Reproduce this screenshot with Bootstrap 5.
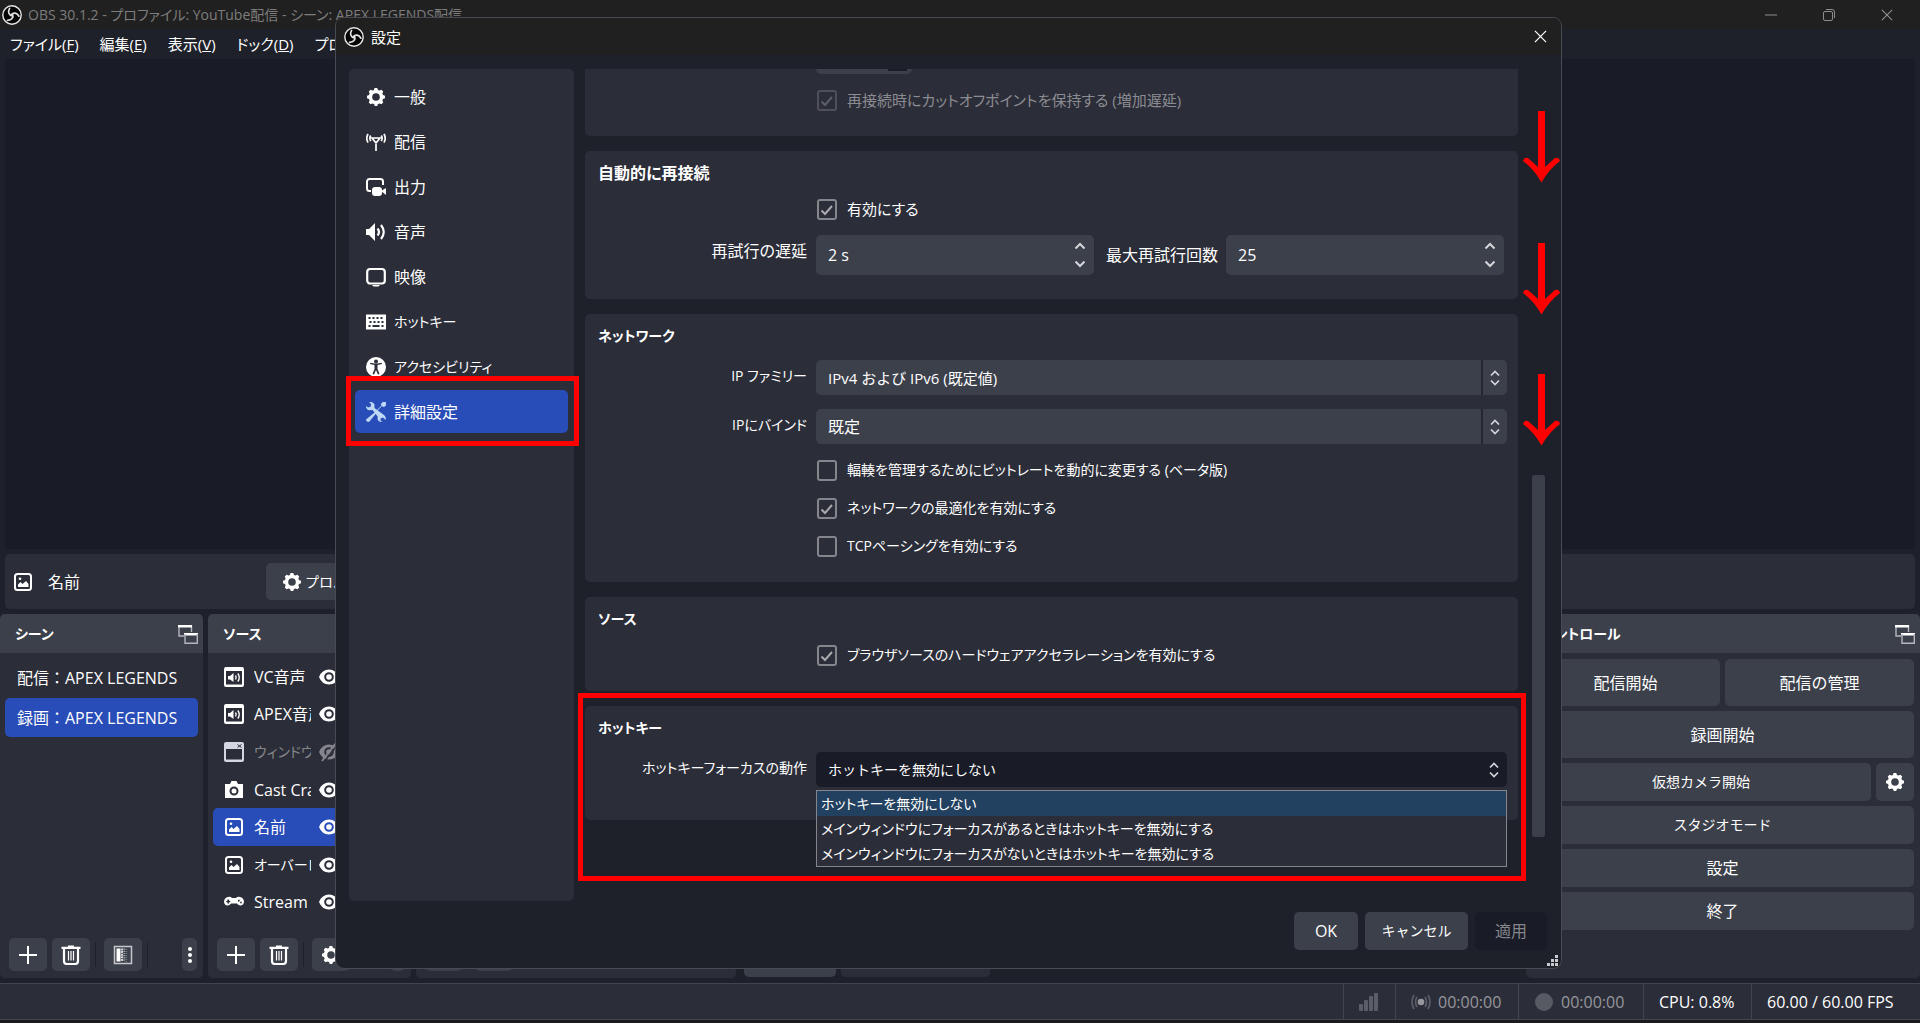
<!DOCTYPE html>
<html lang="ja" data-bs-theme="dark">
<head>
<meta charset="utf-8">
<meta name="viewport" content="width=device-width, initial-scale=1">
<title>OBS 30.1.2</title>
<link rel="stylesheet" href="https://cdn.jsdelivr.net/npm/bootstrap@5.3.0/dist/css/bootstrap.min.css">
<style>
:root{--win:#1f212a;--panel:#2b2d38;--ctl:#3c404b;--deep:#191b26;--sel:#284cb8}
body{background:var(--win);color:#fefefe;font:16px/24px "Open Sans","Noto Sans CJK JP",sans-serif;font-feature-settings:"palt";overflow:hidden}
svg{display:block;flex:none}
.ico{width:20px;height:20px;fill:currentColor}
.t14{font-size:14px!important}
.t15{font-size:15px!important}
.app{height:100vh}
.titlebar{height:29px;background:#202020;color:#7d7d7d;padding-left:2px;gap:6px}
.titlebar .winbtn{width:58px;height:29px}
.winbtn{background:none;border:0;color:#8d8d8d;padding:0}
.menubar{height:30px;padding-left:10px;gap:21px}
.menubar a{color:inherit;text-decoration:none;white-space:nowrap}
.preview{background:var(--deep);margin:0 5px 5px}
.ctxbar{height:55px;background:var(--panel);border-radius:5px;margin:0 5px 5px;padding-left:8px}
.ctxbar .ctxname{width:218px;margin-left:15px}
.ctxbar .tool{height:37px;padding:0 16px;gap:3px}
.tool{background:var(--ctl);border:0;border-radius:5px;color:#fefefe;display:flex;align-items:center;justify-content:center;padding:0;white-space:nowrap}
.docks{height:364px;gap:5px}
.dock{background:var(--panel);border-radius:5px;overflow:hidden;flex:none}
.dock-narrow{width:203px}
.dock-mixer{width:320px}
.dock-ctl{width:394px}
.dockhead{height:39px;background:var(--ctl);font-weight:700;font-size:14px;padding:0 5px 0 15px}
.docktools{height:33px;padding:0 6px 0 9px;margin-bottom:7px;gap:5px}
.docktools .tool{width:38px;height:33px}
.docktools .kebab{width:15px}
.docktools .rule{width:1px;height:25px;background:var(--win);margin-right:3px}
.scenes{padding:5px;gap:1px;font-feature-settings:normal}
.scenes a,.srcs a{color:inherit;text-decoration:none;border-radius:5px;white-space:nowrap}
.scenes a{height:39px;padding:0 12px;display:flex;align-items:center}
.scenes .on,.srcs .on{background:var(--sel)}
.srcs{padding:5px 5px 17px}
.srcs a{display:flex;align-items:center;flex:1 1 0;padding-left:11px;gap:10px}
.srcs span{width:57px;overflow:hidden}
.srcs .eye{margin-left:-2px}
.srcs .off{color:#85868c}
.srcs .pale{color:#d5d7e0}
.tabs{gap:5px;margin-left:3px;padding-bottom:1px}
.tabs .tool{height:33px;width:92px}
.tabs .idle{background:var(--panel);width:149px}
.ctlbtns{padding:6px 6px 0 5px;gap:5px}
.ctlbtns>div{gap:5px}
.ctlbtns .tool{height:38px}
.ctlbtns .tall{height:47px}
.ctlbtns .sq{width:38px}
.status{height:37px;margin-top:5px;border-top:1px solid #42454f;border-bottom:1px solid #42454f;background:var(--panel)}
.status>div{border-left:1px solid #42454f;display:flex;align-items:center;gap:7px;height:100%;padding:0 15px;white-space:nowrap}
.status .st1{width:52px}.status .st2{width:123px}.status .st3{width:125px}.status .st4{width:108px}.status .st5{width:169px}
.dim{color:#96979c}
.deskedge{height:3px;background:#1a1a1a}
/* settings window floats over the main window */
.dlg{position:absolute;inset:17px 358px 54px 335px;background:var(--win);border:1px solid #494b52;border-radius:9px;overflow:hidden}
.dlghead{height:37px;background:#202020;padding:0 14px 0 8px;gap:7px}
.dlghead .winbtn{color:#fff}
.dlgbody{padding:14px 16px 0 13px;gap:11px}
.side{width:225px;background:var(--panel);border-radius:5px;padding:6px 6px;gap:2px}
.side a{height:43px;display:flex;align-items:center;gap:8px;padding-left:11px;color:inherit;text-decoration:none;border-radius:5px}
.side .on{background:var(--sel)}
.side .on svg{color:#bcd8f4}
.pane{gap:15px;min-width:0}
.sect{background:var(--panel);border-radius:5px;padding:10px 11px 24px 13px;display:flex;flex-direction:column;gap:14px}
.sect.cut{border-radius:0 0 5px 5px;padding-top:0}
.sect.last{padding-bottom:33px}
.sect h2{font-size:16px;line-height:24px;font-weight:700;margin:0 0 -2px}
.frow{display:flex;gap:9px;align-items:flex-start}
.frow .cap{width:209px;text-align:right;padding-top:4px;white-space:nowrap;flex:none}
.chk{margin:0 0 0 219px;display:flex;align-items:center;height:24px;padding:0;min-height:0}
.chk .form-check-input{width:20px;height:21px;margin:0 10px 0 0;float:none;background-color:transparent;border:2px solid #85868c;border-radius:3px;box-shadow:none;background-size:100% 100%;flex:none}
.chk .form-check-input:checked{background-color:transparent;border-color:#85868c;background-image:url("data:image/svg+xml,%3csvg xmlns='http://www.w3.org/2000/svg' viewBox='0 0 16 17'%3e%3cpath d='M2.5 9.5 6 13 13 5' fill='none' stroke='%23a9aaae' stroke-width='2'/%3e%3c/svg%3e")}
.chk .form-check-input:disabled{opacity:.4}
.chk .form-check-input:disabled~label{opacity:1;color:#8b8c91}
.field{position:relative}
.field input,.field select{background:var(--ctl);color:#fefefe;border:0;border-radius:5px;padding:0 12px;box-shadow:none;font-size:16px;line-height:24px;width:100%}
.field input{height:40px}
.field select{height:35px;background-image:none}
.field select.open{background:var(--deep)}
.field .arr{position:absolute;inset:0 0 0 auto;width:26px;display:flex;align-items:center;justify-content:center;pointer-events:none;color:#d5d6da}
.field .split{border-left:2px solid #252731}
.spins{padding-right:3px;gap:8px}
.spins .arr{width:28px}
.slid{height:5px;width:96px;margin-left:218px;background:var(--ctl);border-radius:0 0 5px 5px;padding-left:72px}
.slid i{display:block;width:19px;height:2px;background:var(--deep)}
.drop{position:absolute;left:0;right:0;top:38px;border:1px solid #85868c;background:var(--panel);list-style:none;margin:0;padding:0;z-index:2}
.drop li{height:25px;line-height:25px;padding-left:4px;white-space:nowrap}
.drop .on{background:#22405f}
.thumb{width:13px;background:var(--ctl);border-radius:3px;margin:406px 0 64px 3px}
.dlgfoot{padding:11px 14px 18px;gap:7px}
.dlgfoot .tool{height:38px}
.b1{width:64px}.b2{width:103px}.b3{width:72px}
.dlgfoot .tool:disabled{background:var(--deep);color:#85868c}
.grip{position:absolute;right:2px;bottom:1px}
/* red annotations drawn over the window */
.redbox{position:absolute;border:5px solid #f00;pointer-events:none}
.rb1{left:346px;top:376px;width:233px;height:70px}
.rb2{left:578px;right:394px;top:693px;height:188px}
.arrow{position:absolute;right:360px;width:37px;height:72px}
.a1{top:111px}.a2{top:243px}.a3{top:374px}
</style>
</head>
<body>
<svg width="0" height="0" class="position-absolute" aria-hidden="true">
<symbol id="obs" viewBox="0 0 20 20"><circle cx="10" cy="10" r="9.200" fill="#050505" stroke="#e8e8e8" stroke-width="1.400"/><g fill="none" stroke="#e0e0e0" stroke-width="1.700" stroke-linecap="round"><path d="M10.200 10.800C7 10.300 5.400 7 7.600 3.400"/><path d="M10.200 10.800C7 10.300 5.400 7 7.600 3.400" transform="rotate(120 10 10)"/><path d="M10.200 10.800C7 10.300 5.400 7 7.600 3.400" transform="rotate(240 10 10)"/></g></symbol>
<symbol id="gear" viewBox="0 0 20 20"><path fill-rule="evenodd" d="m8.200 1.500.6-.5h2.400l.8 2 1.400.6 2-.9 1.800 1.800-.8 2 .6 1.400 2 .8v2.600l-2 .8-.6 1.400.8 2-1.800 1.800-2-.8-1.400.6-.8 2H8.800l-.8-2-1.400-.6-2 .8-1.800-1.800.8-2-.6-1.400-2-.8V8.700l2-.8.6-1.400-.8-2 1.800-1.800 2 .9L8 3zM10 6.200a3.800 3.800 0 1 0 0 7.600 3.800 3.800 0 0 0 0-7.600z"/></symbol>
<symbol id="ant" viewBox="0 0 20 20"><path d="M6 6h8l-4 5zM10 10v9M4.700 3.500q-1.600 2.800 0 5.600M2 2q-2.400 4.300 0 8.600M15.300 3.500q1.600 2.800 0 5.600M18 2q2.400 4.300 0 8.600" fill="none" stroke="currentColor" stroke-width="1.700"/></symbol>
<symbol id="out" viewBox="0 0 20 20"><path d="M5 14H3.500A2.500 2.500 0 0 1 1 11.500v-7A2.500 2.500 0 0 1 3.500 2h11A2.500 2.500 0 0 1 17 4.500V8" fill="none" stroke="currentColor" stroke-width="2"/><rect x="6" y="10" width="10" height="9" rx="3"/><path d="m15 14 5-3v7z"/></symbol>
<symbol id="spk" viewBox="0 0 20 20"><path d="M0 7h3l6-6v18l-6-6H0z"/><path d="M11.500 6.500q3 3.500 0 7M15 3q5.500 7 0 14" fill="none" stroke="currentColor" stroke-width="2.200"/></symbol>
<symbol id="mon" viewBox="0 0 20 20"><rect x="1.200" y="2" width="17.600" height="14.500" rx="3" fill="none" stroke="currentColor" stroke-width="2.200"/><path d="M6 18h8l-1.500 1.500h-5z"/></symbol>
<symbol id="kbd" viewBox="0 0 20 20"><path fill-rule="evenodd" d="M0 2.500h20v15H0zM2.500 5v2h2V5zm4 0v2h2V5zm4 0v2h2V5zm4 0v2h2V5zM3.500 9v2h2V9zm4 0v2h2V9zm4 0v2h2V9zm4 0v2h2V9zM2.500 13v2h2v-2zm4 0v2h7v-2zm9 0v2h2v-2z"/></symbol>
<symbol id="acc" viewBox="0 0 20 20"><circle cx="10" cy="10" r="10"/><g fill="#2b2d38"><circle cx="10" cy="4.500" r="2"/><path d="m4 7 4.500 1v4L6.500 17l1.500.6 2-4.600 2 4.600 1.500-.6-2-5V8L16 7l-.4-1.300-4 .9H8.400l-4-.9z"/></g></symbol>
<symbol id="tls" viewBox="0 0 20 20"><path d="M0 17.500 11 8.500l.8.800L3 20q-3 0-3-2.500z"/><path d="M10.500 9 17 2.500M16 1l3-1 1 1-1 3-2 .5L15.500 3z" stroke="currentColor" stroke-width="1"/><path d="M3 0q4-.5 5.500 2.500V6L18 13q2.500 2 1.500 5l-2.500-2.500-2.500 1 .2 2 1.800 1.300q-4 .5-5-2.800l.2-2.500L6.500 8 3 8.300Q0 7.500 0 4l2.200 1.500L4.800 4.500 5 2z"/></symbol>
<symbol id="img" viewBox="0 0 20 20"><rect x="2" y="2" width="16" height="16" rx="2.500" fill="none" stroke="currentColor" stroke-width="2"/><path d="M5 15v-2.500L7.500 10l2 2 3.500-3 2.500 3v3z"/><circle cx="7" cy="6.800" r="1.300"/></symbol>
<symbol id="aud" viewBox="0 0 20 20"><path fill-rule="evenodd" d="M2 0h16a2 2 0 0 1 2 2v16a2 2 0 0 1-2 2H2a2 2 0 0 1-2-2V2a2 2 0 0 1 2-2zm0 4v13.500h16V4z"/><path d="M4 9h2l3.500-3v9L6 12.500H4z"/><path d="M11.500 8.500q1.500 2 0 4M13.800 6.500q3 4 0 8" fill="none" stroke="currentColor" stroke-width="1.400"/></symbol>
<symbol id="wnd" viewBox="0 0 20 20"><path fill-rule="evenodd" d="M2 0h16a2 2 0 0 1 2 2v16a2 2 0 0 1-2 2H2a2 2 0 0 1-2-2V2a2 2 0 0 1 2-2zm0 7v10.500h16V7z"/><path d="m13.500 2.500 4 3m0-3-4 3" stroke="#2b2d38"/></symbol>
<symbol id="cam" viewBox="0 0 20 20"><path fill-rule="evenodd" d="M1 4h5l1.500-3h5L14 4h5v14H1zm9 2.500a4.500 4.500 0 1 0 0 9 4.500 4.500 0 0 0 0-9z"/><circle cx="10" cy="11" r="2.500"/></symbol>
<symbol id="pad" viewBox="0 0 20 20"><path fill-rule="evenodd" d="M4 5q2.500-.6 4 1h4q1.500-1.600 4-1 3.500.5 4 4.500-.3 4-3.500 4-2.300 0-3.500-2H7q-1.200 2-3.500 2-3.200 0-3.500-4Q.500 5.500 4 5zm-.5 2.500v1.200H2.300v1.500h1.200v1.200H5v-1.200h1.200V8.700H5V7.500zm10.500.3v1.600h1.600V7.800zm2.200 1.900v1.600h1.600V9.700z"/></symbol>
<symbol id="eye" viewBox="0 0 20 20"><path fill-rule="evenodd" d="M0 10q3-7.500 10-7.500T20 10q-3 7.500-10 7.500T0 10zm10-4.800a4.800 4.800 0 1 0 0 9.600 4.800 4.800 0 0 0 0-9.600z"/><circle cx="10" cy="10" r="2.800"/></symbol>
<symbol id="eyo" viewBox="0 0 20 20"><path fill-rule="evenodd" d="M0 10q3-7.500 10-7.500T20 10q-3 7.500-10 7.500T0 10zm10-4.800a4.800 4.800 0 1 0 0 9.600 4.800 4.800 0 0 0 0-9.600z"/><circle cx="10" cy="10" r="2.800"/><path d="M3 19 17 1" stroke="currentColor" stroke-width="2"/><path d="M5 20 19 2" stroke="#2b2d38" stroke-width="1.500"/></symbol>
<symbol id="pop" viewBox="0 0 20 20"><path d="M6 12H1V2h12.500v6" fill="none" stroke="#b4b6bb" stroke-width="1.400"/><path d="M0 1h14v2.500H0zM6 9h14v2.500H6z"/><path d="M7 10v9.300h12.300V10" fill="none" stroke="#b4b6bb" stroke-width="1.400"/></symbol>
<symbol id="add" viewBox="0 0 20 20"><path d="M10 1v18M1 10h18" stroke="currentColor" stroke-width="2"/></symbol>
<symbol id="bin" viewBox="0 0 20 20"><path d="M.5 2.800h19M7 1.500h6M3 4v12q0 3 3 3h8q3 0 3-3V4" fill="none" stroke="currentColor" stroke-width="2.200"/><path d="M7.500 6v9.500M10 6v9.500M12.500 6v9.500" stroke="currentColor" stroke-width="1.200"/></symbol>
<symbol id="flt" viewBox="0 0 20 20"><rect x="1.500" y="1.500" width="17" height="17" fill="none" stroke="#c6c7cb" stroke-width="1.500"/><path d="M3.500 3.500h4v13h-4z"/><path d="M9 3.500v13" stroke="#d0d1d4" stroke-width="2" stroke-dasharray="2 .6"/><path d="M11.200 3.500v13" stroke="#a3a5ab" stroke-width="1.800" stroke-dasharray="1.200 1"/><path d="M13.300 4v13" stroke="#74777f" stroke-width="1.600" stroke-dasharray="1 1"/></symbol>
<symbol id="keb" viewBox="0 0 6 20"><circle cx="3" cy="4" r="2"/><circle cx="3" cy="10" r="2"/><circle cx="3" cy="16" r="2"/></symbol>
<symbol id="ud" viewBox="0 0 10 16"><path d="m1 5.500 4-4 4 4M1 10.500l4 4 4-4" fill="none" stroke="currentColor" stroke-width="1.700"/></symbol>
<symbol id="spn" viewBox="0 0 12 26"><path d="m1.500 6.500 4.500-4.500 4.500 4.500M1.500 19.500 6 24l4.500-4.500" fill="none" stroke="currentColor" stroke-width="2"/></symbol>
<symbol id="dn" viewBox="0 0 37 72"><path d="M15 0h7v56L32 47q4-1 5 3Q26 58 18.500 71.500 11 58 0 50q1-4 5-3l10 9z" fill="#f00"/></symbol>
<symbol id="cls" viewBox="0 0 14 14"><path d="m1 1 12 12M13 1 1 13" stroke="currentColor" stroke-width="1.300"/></symbol>
</svg>

<div class="app d-flex flex-column">
  <header class="titlebar d-flex align-items-center">
    <svg class="ico"><use href="#obs"/></svg>
    <span class="text-nowrap t14">OBS 30.1.2 - プロファイル: YouTube配信 - シーン: APEX LEGENDS配信</span>
    <div class="ms-auto d-flex me-1">
      <button class="winbtn" aria-label="最小化"><svg class="m-auto" width="12" height="12"><path d="M0 6h12" stroke="currentColor"/></svg></button>
      <button class="winbtn" aria-label="元に戻す"><svg class="m-auto" width="12" height="12" fill="none" stroke="currentColor"><rect x=".5" y="2.500" width="9" height="9" rx="1.500"/><path d="M3 .5h6q2.500 0 2.500 2.500v6"/></svg></button>
      <button class="winbtn" aria-label="閉じる"><svg class="m-auto" width="12" height="12"><use href="#cls"/></svg></button>
    </div>
  </header>
  <nav class="menubar d-flex align-items-center t15">
    <a href="#">ファイル(<u>F</u>)</a><a href="#">編集(<u>E</u>)</a><a href="#">表示(<u>V</u>)</a><a href="#">ドック(<u>D</u>)</a><a href="#">プロファイル(<u>P</u>)</a>
  </nav>
  <main class="preview flex-grow-1"></main>
  <div class="ctxbar d-flex align-items-center">
    <svg class="ico"><use href="#img"/></svg>
    <span class="ctxname">名前</span>
    <button class="tool t14"><svg class="ico"><use href="#gear"/></svg>プロパティ</button>
  </div>
  <div class="docks d-flex">
    <section class="dock dock-narrow d-flex flex-column">
      <div class="dockhead d-flex align-items-center justify-content-between">シーン<svg class="ico"><use href="#pop"/></svg></div>
      <nav class="scenes d-flex flex-column flex-grow-1"><a href="#">配信：APEX LEGENDS</a><a href="#" class="on">録画：APEX LEGENDS</a></nav>
      <div class="docktools d-flex align-items-center">
        <button class="tool" aria-label="追加"><svg class="ico"><use href="#add"/></svg></button>
        <button class="tool" aria-label="削除"><svg class="ico"><use href="#bin"/></svg></button>
        <span class="rule"></span>
        <button class="tool" aria-label="フィルタ"><svg class="ico"><use href="#flt"/></svg></button>
        <span class="rule"></span>
        <button class="tool kebab ms-auto" aria-label="その他"><svg class="ico"><use href="#keb"/></svg></button>
      </div>
    </section>
    <section class="dock dock-narrow d-flex flex-column">
      <div class="dockhead d-flex align-items-center justify-content-between">ソース<svg class="ico"><use href="#pop"/></svg></div>
      <nav class="srcs d-flex flex-column flex-grow-1">
        <a href="#"><svg class="ico"><use href="#aud"/></svg><span>VC音声</span><svg class="ico eye"><use href="#eye"/></svg></a>
        <a href="#"><svg class="ico"><use href="#aud"/></svg><span>APEX音声</span><svg class="ico eye"><use href="#eye"/></svg></a>
        <a href="#" class="off"><svg class="ico pale"><use href="#wnd"/></svg><span class="t14">ウィンドウ</span><svg class="ico eye"><use href="#eyo"/></svg></a>
        <a href="#"><svg class="ico"><use href="#cam"/></svg><span>Cast Craft</span><svg class="ico eye"><use href="#eye"/></svg></a>
        <a href="#" class="on"><svg class="ico"><use href="#img"/></svg><span>名前</span><svg class="ico eye"><use href="#eye"/></svg></a>
        <a href="#"><svg class="ico"><use href="#img"/></svg><span class="t14">オーバーレ</span><svg class="ico eye"><use href="#eye"/></svg></a>
        <a href="#"><svg class="ico"><use href="#pad"/></svg><span>Stream</span><svg class="ico eye"><use href="#eye"/></svg></a>
      </nav>
      <div class="docktools d-flex align-items-center">
        <button class="tool" aria-label="追加"><svg class="ico"><use href="#add"/></svg></button>
        <button class="tool" aria-label="削除"><svg class="ico"><use href="#bin"/></svg></button>
        <span class="rule"></span>
        <button class="tool" aria-label="プロパティ"><svg class="ico"><use href="#gear"/></svg></button>
        <button class="tool kebab ms-auto" aria-label="その他"><svg class="ico"><use href="#keb"/></svg></button>
      </div>
    </section>
    <section class="dock dock-mixer d-flex flex-column justify-content-end">
      <div class="docktools d-flex gap-2"><button class="tool" aria-label="ミキサー設定"></button><button class="tool ms-1" aria-label="ミキサーメニュー"></button></div>
    </section>
    <div class="tabs d-flex align-items-end">
      <button class="tool" aria-label="シーントランジション"></button>
      <button class="tool idle" aria-label="タブ"></button>
    </div>
    <section class="dock dock-ctl ms-auto">
      <div class="dockhead d-flex align-items-center justify-content-between">コントロール<svg class="ico"><use href="#pop"/></svg></div>
      <div class="ctlbtns d-flex flex-column">
        <div class="d-flex"><button class="tool tall w-50">配信開始</button><button class="tool tall w-50">配信の管理</button></div>
        <button class="tool tall">録画開始</button>
        <div class="d-flex"><button class="tool flex-grow-1 t14">仮想カメラ開始</button><button class="tool sq" aria-label="仮想カメラ設定"><svg class="ico"><use href="#gear"/></svg></button></div>
        <button class="tool t14">スタジオモード</button>
        <button class="tool">設定</button>
        <button class="tool">終了</button>
      </div>
    </section>
  </div>
  <footer class="status d-flex justify-content-end">
    <div class="st1"><svg width="20" height="20" fill="#5b5d67"><rect y="12" width="4" height="7" rx="1"/><rect x="5" y="8" width="4" height="11" rx="1"/><rect x="10" y="4" width="4" height="15" rx="1"/><rect x="15" y="1" width="4" height="18" rx="1"/></svg></div>
    <div class="dim st2"><svg width="20" height="20" fill="none" stroke="#5b5d67" stroke-width="1.700"><circle cx="10" cy="10" r="3.300" fill="#96979c" stroke="none"/><path d="M6 5q-3 5 0 10M14 5q3 5 0 10M3 3q-4 7 0 14M17 3q4 7 0 14"/></svg>00:00:00</div>
    <div class="dim st3"><svg width="20" height="20"><circle cx="10" cy="10" r="9" fill="#575963"/></svg>00:00:00</div>
    <div class="st4">CPU: 0.8%</div>
    <div class="st5">60.00 / 60.00 FPS</div>
  </footer>
  <div class="deskedge"></div>
</div>

<div class="dlg d-flex flex-column" role="dialog" aria-label="設定">
  <div class="dlghead d-flex align-items-center"><svg class="ico"><use href="#obs"/></svg><span class="t15">設定</span><button class="winbtn ms-auto" aria-label="閉じる"><svg width="13" height="13"><use href="#cls"/></svg></button></div>
  <div class="dlgbody d-flex flex-grow-1">
    <nav class="side d-flex flex-column">
      <a href="#"><svg class="ico"><use href="#gear"/></svg>一般</a>
      <a href="#"><svg class="ico"><use href="#ant"/></svg>配信</a>
      <a href="#"><svg class="ico"><use href="#out"/></svg>出力</a>
      <a href="#"><svg class="ico"><use href="#spk"/></svg>音声</a>
      <a href="#"><svg class="ico"><use href="#mon"/></svg>映像</a>
      <a href="#" class="t14"><svg class="ico"><use href="#kbd"/></svg>ホットキー</a>
      <a href="#" class="t14"><svg class="ico"><use href="#acc"/></svg>アクセシビリティ</a>
      <a href="#" class="on"><svg class="ico"><use href="#tls"/></svg>詳細設定</a>
    </nav>
    <form class="pane d-flex flex-column flex-grow-1">
      <section class="sect cut">
        <div class="slid"><i></i></div>
        <div class="chk form-check"><input class="form-check-input" type="checkbox" id="c0" checked disabled><label class="t15" for="c0">再接続時にカットオフポイントを保持する (増加遅延)</label></div>
      </section>
      <section class="sect">
        <h2>自動的に再接続</h2>
        <div class="chk form-check"><input class="form-check-input" type="checkbox" id="c1" checked><label class="t15" for="c1">有効にする</label></div>
        <div class="frow"><label class="cap" for="s1">再試行の遅延</label>
          <div class="spins d-flex align-items-center flex-grow-1">
            <div class="field flex-fill"><input class="form-control" id="s1" type="text" value="2 s"><span class="arr"><svg width="12" height="26"><use href="#spn"/></svg></span></div>
            <label for="s2" class="text-nowrap ms-1">最大再試行回数</label>
            <div class="field flex-fill"><input class="form-control" id="s2" type="text" value="25"><span class="arr"><svg width="12" height="26"><use href="#spn"/></svg></span></div>
          </div></div>
      </section>
      <section class="sect">
        <h2 class="t14">ネットワーク</h2>
        <div class="frow"><label class="cap t14" for="f1">IP ファミリー</label><div class="field flex-grow-1"><select class="form-select t15" id="f1"><option>IPv4 および IPv6 (既定値)</option></select><span class="arr split"><svg width="10" height="16"><use href="#ud"/></svg></span></div></div>
        <div class="frow"><label class="cap t14" for="f2">IPにバインド</label><div class="field flex-grow-1"><select class="form-select" id="f2"><option>既定</option></select><span class="arr split"><svg width="10" height="16"><use href="#ud"/></svg></span></div></div>
        <div class="chk form-check"><input class="form-check-input" type="checkbox" id="c2"><label class="t14" for="c2">輻輳を管理するためにビットレートを動的に変更する (ベータ版)</label></div>
        <div class="chk form-check"><input class="form-check-input" type="checkbox" id="c3" checked><label class="t14" for="c3">ネットワークの最適化を有効にする</label></div>
        <div class="chk form-check"><input class="form-check-input" type="checkbox" id="c4"><label class="t14" for="c4">TCPペーシングを有効にする</label></div>
      </section>
      <section class="sect">
        <h2 class="t14">ソース</h2>
        <div class="chk form-check"><input class="form-check-input" type="checkbox" id="c5" checked><label class="t14" for="c5">ブラウザソースのハードウェアアクセラレーションを有効にする</label></div>
      </section>
      <section class="sect last">
        <h2 class="t14">ホットキー</h2>
        <div class="frow"><label class="cap t14" for="f3">ホットキーフォーカスの動作</label><div class="field flex-grow-1"><select class="form-select open t14" id="f3"><option>ホットキーを無効にしない</option></select><span class="arr"><svg width="10" height="16"><use href="#ud"/></svg></span>
          <ul class="drop t14" role="listbox"><li class="on" role="option">ホットキーを無効にしない</li><li role="option">メインウィンドウにフォーカスがあるときはホットキーを無効にする</li><li role="option">メインウィンドウにフォーカスがないときはホットキーを無効にする</li></ul></div></div>
      </section>
    </form>
    <div class="thumb"></div>
  </div>
  <div class="dlgfoot d-flex justify-content-end"><button class="tool b1">OK</button><button class="tool b2 t14">キャンセル</button><button class="tool b3" disabled>適用</button></div>
  <svg class="grip" width="12" height="12" fill="#c9cacd"><path d="M8 0h3v3H8zM4 4h3v3H4zM8 4h3v3H8zM0 8h3v3H0zM4 8h3v3H4zM8 8h3v3H8z"/></svg>
</div>

<div class="redbox rb1"></div>
<div class="redbox rb2"></div>
<svg class="arrow a1"><use href="#dn"/></svg>
<svg class="arrow a2"><use href="#dn"/></svg>
<svg class="arrow a3"><use href="#dn"/></svg>
<script src="https://cdn.jsdelivr.net/npm/bootstrap@5.3.0/dist/js/bootstrap.bundle.min.js"></script>
</body>
</html>
